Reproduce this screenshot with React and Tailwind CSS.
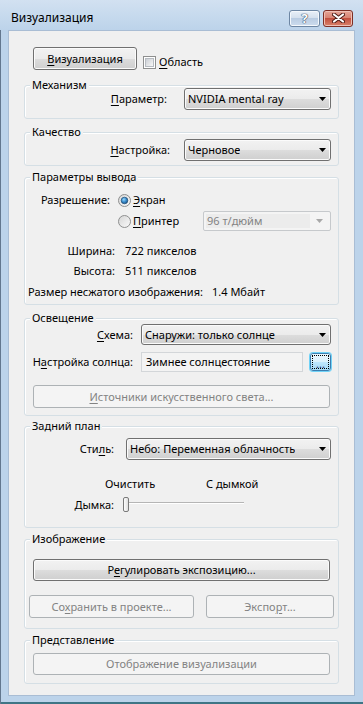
function U({ children }) {
  return <span className="underline decoration-1 underline-offset-[2px]">{children}</span>;
}

function Arrow({ color = "#000" }) {
  return (
    <svg width="7" height="4" viewBox="0 0 7 4" className="shrink-0">
      <path d="M0 0h7L3.5 4z" fill={color} />
    </svg>
  );
}

function Combo({ value, className = "" }) {
  return (
    <div
      className={`flex items-center justify-between rounded-[3px] border border-[#707070] bg-[linear-gradient(#f2f2f2,#ebebeb_50%,#dddddd_50%,#cfcfcf)] pl-[3px] pr-[4px] shadow-[inset_0_0_0_1px_#fbfbfb] ${className}`}
    >
      <span className="truncate">{value}</span>
      <Arrow />
    </div>
  );
}

function DisabledCombo({ value, className = "" }) {
  return (
    <div
      className={`flex items-center rounded-[2px] border border-[#c6c9cc] bg-[#f4f4f4] p-[2px] text-[#838383] ${className}`}
    >
      <span className="flex h-full flex-1 items-center bg-[#ececec] pl-[1px]">{value}</span>
      <div className="flex w-[18px] justify-center">
        <Arrow color="#a8a8a8" />
      </div>
    </div>
  );
}

function Btn({ children, disabled, className = "" }) {
  const look = disabled
    ? "border-[#adb2b5] bg-[#f4f4f4] text-[#838383]"
    : "border-[#707070] bg-[linear-gradient(#f2f2f2,#ebebeb_50%,#dddddd_50%,#cfcfcf)] shadow-[inset_0_0_0_1px_#fbfbfb]";
  return (
    <div className={`flex items-center justify-center rounded-[3px] border ${look} ${className}`}>
      <span>{children}</span>
    </div>
  );
}

function Radio({ checked, className = "" }) {
  return (
    <svg width="13" height="13" viewBox="0 0 13 13" className={`shrink-0 ${className}`}>
      <defs>
        <linearGradient id={checked ? "rb1" : "rb0"} x1="0" y1="0" x2="1" y2="1">
          <stop offset="0" stopColor="#d4d4d4" />
          <stop offset="1" stopColor="#fbfbfb" />
        </linearGradient>
        <radialGradient id="rdot" cx="0.4" cy="0.35" r="0.7">
          <stop offset="0" stopColor="#9bd9fb" />
          <stop offset="0.5" stopColor="#3b8fd0" />
          <stop offset="1" stopColor="#1a4f80" />
        </radialGradient>
      </defs>
      <circle cx="6.5" cy="6.5" r="6" fill={`url(#${checked ? "rb1" : "rb0"})`} stroke="#8e8f8f" />
      {checked && <circle cx="6.5" cy="6.5" r="3.3" fill="url(#rdot)" stroke="#1d4b74" strokeWidth="0.7" />}
    </svg>
  );
}

function Checkbox() {
  return (
    <div className="h-[13px] w-[13px] shrink-0 border border-[#8e8f8f] bg-white p-[1px]">
      <div className="h-full w-full border border-[#b6bbc1] bg-[linear-gradient(135deg,#cbcfd5,#f7f7f7)]" />
    </div>
  );
}

function Group({ title, className = "", children }) {
  return (
    <div
      className={`relative ml-[15px] w-[315px] rounded-[3px] border border-[#d5dfe5] shadow-[inset_1px_1px_0_#fff] ${className}`}
    >
      <span className="absolute -top-[9px] left-[5px] bg-[#f0f0f0] px-[2px]">{title}</span>
      {children}
    </div>
  );
}

export default function App() {
  return (
    <div className="h-[704px] w-[363px] overflow-hidden bg-[#bcd3ea] font-['Segoe_UI','Noto_Sans',sans-serif] text-[11px] leading-[16px] text-black shadow-[inset_1px_1px_0_#63778e,inset_0_-2px_0_#3f7585]">
      {/* title bar */}
      <div className="flex h-[30px] items-center bg-[linear-gradient(#d2e1f1,#bcd3ea)] pl-[11px] pr-[10px] pt-[6px]">
        <span className="flex-1 text-[12px]">Визуализация</span>
        <div className="flex h-[17px] w-[31px] items-center justify-center rounded-[3px] border border-[#6d86a3] bg-[linear-gradient(#e9f0f8,#d3dfed_50%,#b9cce2_50%,#cddcee)] shadow-[inset_0_0_0_1px_#f4f8fc]">
          <span className="text-[13px] font-bold leading-none text-white [text-shadow:0_0_1px_#2f4560,0_0_1px_#2f4560,0_0_1px_#2f4560]">?</span>
        </div>
        <div className="ml-[3px] flex h-[17px] w-[30px] items-center justify-center rounded-[3px] border border-[#7d2f25] bg-[linear-gradient(#e6a597,#d6806f_50%,#c2503f_50%,#d9826a)] shadow-[inset_0_0_0_1px_#efc0b5]">
          <svg width="13" height="10" viewBox="0 0 13 10">
            <path d="M2 1.5l9 7M11 1.5l-9 7" stroke="#4d1a14" strokeWidth="4" strokeLinecap="round" />
            <path d="M2 1.5l9 7M11 1.5l-9 7" stroke="#fff" strokeWidth="2.2" strokeLinecap="round" />
          </svg>
        </div>
      </div>

      {/* client area */}
      <div className="ml-[8px] h-[666px] w-[347px] border border-[#a9bdd4] bg-[#f0f0f0]">
        <div className="ml-[24px] mt-[16px] flex items-start">
          <Btn className="h-[23px] w-[104px]">
            <U>В</U>изуализация
          </Btn>
          <div className="ml-[6px] mt-[7px] flex items-center">
            <Checkbox />
            <span className="ml-[3px]">
              <U>О</U>бласть
            </span>
          </div>
        </div>

        <Group title="Механизм" className="mt-[15px] h-[34px]">
          <div className="mt-[2px] flex items-center">
            <span className="w-[142px] text-right">
              <U>П</U>араметр:
            </span>
            <Combo className="ml-[17px] h-[22px] w-[147px]" value="NVIDIA mental ray" />
          </div>
        </Group>

        <Group title="Качество" className="mt-[13px] h-[34px]">
          <div className="mt-[6px] flex items-center">
            <span className="w-[145px] text-right">
              <U>Н</U>астройка:
            </span>
            <Combo className="ml-[14px] h-[22px] w-[147px]" value="Черновое" />
          </div>
        </Group>

        <Group title="Параметры вывода" className="mt-[11px] h-[128px]">
          <div className="mt-[14px] flex h-[16px] items-center">
            <span className="w-[85px] text-right">Разрешение:</span>
            <Radio checked className="ml-[8px]" />
            <span className="ml-[2px]">
              <U>Э</U>кран
            </span>
          </div>
          <div className="mt-[3px] flex h-[20px] items-center">
            <Radio className="ml-[93px]" />
            <span className="ml-[2px]">
              <U>П</U>ринтер
            </span>
            <DisabledCombo className="ml-auto mr-[7px] h-[20px] w-[128px]" value="96 т/дюйм" />
          </div>
          <div className="mt-[12px] flex">
            <span className="w-[90px] text-right">Ширина:</span>
            <span className="ml-[10px]">722 пикселов</span>
          </div>
          <div className="mt-[4px] flex">
            <span className="w-[90px] text-right">Высота:</span>
            <span className="ml-[10px]">511 пикселов</span>
          </div>
          <div className="mt-[5px] flex">
            <span className="w-[178px] whitespace-nowrap text-right">Размер несжатого изображения:</span>
            <span className="ml-[9px]">1.4 Мбайт</span>
          </div>
        </Group>

        <Group title="Освещение" className="mt-[13px] h-[98px]">
          <div className="mt-[5px] flex items-center">
            <span className="w-[108px] text-right">
              <U>С</U>хема:
            </span>
            <Combo className="ml-[8px] h-[21px] w-[190px]" value="Снаружи: только солнце" />
          </div>
          <div className="mt-[7px] flex items-center">
            <span className="w-[108px] whitespace-nowrap text-right">
              Н<U>а</U>стройка солнца:
            </span>
            <div className="ml-[8px] flex h-[20px] w-[162px] items-center border border-[#d3d6d9] bg-[#f3f3f3] pl-[4px]">
              Зимнее солнцестояние
            </div>
            <div className="relative ml-[7px] h-[18px] w-[21px] rounded-[3px] border border-[#3c7fb1] bg-[linear-gradient(#eaf6fd,#d9f0fc_50%,#bee6fd_50%,#a7d9f5)] shadow-[0_0_0_1px_#70d2f7]">
              <div className="absolute inset-[1px] border border-dotted border-black" />
              <span className="absolute inset-x-0 bottom-[2px] text-center text-[11px] leading-[8px] text-[#1c2f6e]">...</span>
            </div>
          </div>
          <Btn disabled className="ml-[8px] mt-[13px] h-[23px] w-[297px]">
            <U>И</U>сточники искусственного света...
          </Btn>
        </Group>

        <Group title="Задний план" className="mt-[10px] h-[102px]">
          <div className="mt-[11px] flex items-center">
            <span className="w-[89px] text-right">
              Сти<U>л</U>ь:
            </span>
            <Combo className="ml-[12px] h-[22px] w-[205px]" value="Небо: Переменная облачность" />
          </div>
          <div className="ml-[80px] mt-[16px] flex">
            <span className="w-[101px]">Очистить</span>
            <span>С дымкой</span>
          </div>
          <div className="mt-[5px] flex h-[15px] items-center">
            <span className="w-[89px] text-right">Дымка:</span>
            <div className="relative ml-[9px] h-[15px] w-[121px]">
              <div className="absolute left-[5px] right-0 top-[5px] h-[2px] border-t border-[#b5b5b5] bg-white" />
              <div className="absolute left-0 top-0 h-[15px] w-[6px] rounded-[2px] border border-[#7a7a7a] bg-[linear-gradient(90deg,#fdfdfd,#e0e0e0)]" />
            </div>
          </div>
        </Group>

        <Group title="Изображение" className="mt-[11px] h-[90px]">
          <Btn className="ml-[8px] mt-[19px] h-[22px] w-[297px]">
            Р<U>е</U>гулировать экспозицию...
          </Btn>
          <div className="mt-[14px] flex">
            <Btn disabled className="ml-[4px] h-[23px] w-[165px]">
              Со<U>х</U>ранить в проекте...
            </Btn>
            <Btn disabled className="ml-[12px] h-[23px] w-[128px]">
              Экспо<U>р</U>т...
            </Btn>
          </div>
        </Group>

        <Group title="Представление" className="mt-[11px] h-[44px]">
          <Btn disabled className="ml-[8px] mt-[12px] h-[22px] w-[297px]">
            Отображение визуализации
          </Btn>
        </Group>
      </div>
    </div>
  );
}
